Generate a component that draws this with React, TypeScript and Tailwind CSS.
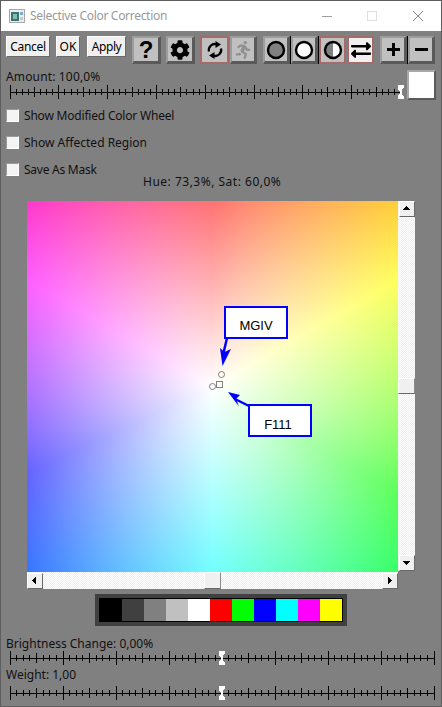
import React from "react";
import { FaCog, FaRunning, FaExchangeAlt } from "react-icons/fa";

const font = "font-['Noto_Sans','Liberation_Sans',sans-serif]";

function Slider({ x0, x1, cx, h = 17 }: { x0: number; x1: number; cx: number; h?: number }) {
  const ticks: React.ReactNode[] = [];
  const mid = Math.floor(h / 2);
  for (let i = 0; i <= 64; i++) {
    const x = Math.round(x0 + ((x1 - x0) * i) / 64) + 0.5;
    const len = i % 8 === 0 ? 7 : i % 4 === 0 ? 5 : 3;
    ticks.push(<line key={i} x1={x} x2={x} y1={mid - len} y2={mid + len} stroke="#000" />);
  }
  return (
    <svg width={440} height={h} className="block" shapeRendering="crispEdges">
      <line x1={x0} x2={x1} y1={mid + 0.5} y2={mid + 0.5} stroke="#000" />
      {ticks}
      <polygon
        points={`${cx - 3},${mid - 7} ${cx + 3},${mid - 7} ${cx + 3},${mid - 4} ${cx + 1},${mid - 1} ${cx + 1},${mid + 2} ${cx + 3},${mid + 4} ${cx + 3},${mid + 7} ${cx - 3},${mid + 7} ${cx - 3},${mid + 4} ${cx - 1},${mid + 2} ${cx - 1},${mid - 1} ${cx - 3},${mid - 4}`}
        fill="#fff"
      />
    </svg>
  );
}

function TextBtn({ label, w, cls }: { label: string; w: string; cls: string }) {
  return (
    <div
      className={`${w} ${cls} h-[21px] flex items-center justify-center bg-[#f0f0f0] border border-t-white border-l-white border-r-[#696969] border-b-[#696969] text-[12px] text-black`}
    >
      {label}
    </div>
  );
}

function IconBtn({
  children,
  w = "w-[29px]",
  state = "normal",
}: {
  children: React.ReactNode;
  w?: string;
  state?: "normal" | "on" | "sel";
}) {
  const cls =
    state === "normal"
      ? "bg-[#c0c0c0] border-t-[#9c9c9c] border-l-[#9c9c9c] border-r-[#5a5a5a] border-b-[#5a5a5a] border-r-[3px] border-b-[3px]"
      : state === "on"
        ? "bg-[#c0c0c0] border-[#a56b6b]"
        : "bg-[#f0f0f0] border-[#a56b6b]";
  return <div className={`${w} h-[28px] shrink-0 flex items-center justify-center border-2 ${cls}`}>{children}</div>;
}

function Circle({ fill }: { fill: "gray" | "white" | "half" }) {
  return (
    <svg width="20" height="20" viewBox="0 0 20 20">
      <circle cx="10" cy="10" r="8" fill={fill === "gray" ? "#808080" : "#fff"} />
      {fill === "half" && <path d="M10 2a8 8 0 0 0 0 16z" fill="#808080" />}
      <circle cx="10" cy="10" r="8" fill="none" stroke="#000" strokeWidth="2.4" />
    </svg>
  );
}

function ScrollBtn({ dir }: { dir: "up" | "down" | "left" | "right" }) {
  const pts = {
    up: "4,9 11,9 7.5,5",
    down: "4,6 11,6 7.5,10",
    left: "9,4 9,11 5,7.5",
    right: "6,4 6,11 10,7.5",
  }[dir];
  return (
    <div className="w-[16px] h-[16px] shrink-0 bg-[#f0f0f0] border-t border-l border-t-white border-l-white border-r border-b border-r-[#696969] border-b-[#696969]">
      <svg width="15" height="15" className="block -mt-px -ml-px" shapeRendering="crispEdges">
        <polygon points={pts} fill="#000" />
      </svg>
    </div>
  );
}

const track = "bg-[repeating-conic-gradient(#ffffff_0_25%,#eeeeee_0_50%)] bg-size-[2px_2px]";

function Check({ label, cls }: { label: string; cls: string }) {
  return (
    <div className="flex items-center h-[13px] gap-[5px]">
      <div className="w-[13px] h-[13px] bg-[#f4f4f4] border border-t-[#9a9a9a] border-l-[#9a9a9a] border-r-white border-b-white" />
      <span className={`text-[12px] leading-[13px] text-[#111] ${cls}`}>{label}</span>
    </div>
  );
}

const swatches = [
  "bg-[#000000]",
  "bg-[#404040]",
  "bg-[#808080]",
  "bg-[#c0c0c0]",
  "bg-[#ffffff]",
  "bg-[#ff0000]",
  "bg-[#00ff00]",
  "bg-[#0000ff]",
  "bg-[#00ffff]",
  "bg-[#ff00ff]",
  "bg-[#ffff00]",
];

export default function App() {
  return (
    <div className={`w-[442px] h-[707px] overflow-hidden bg-[#808080] border border-[#5e5e5e] ${font} relative`}>
      {/* Title bar */}
      <div className="h-[30px] bg-white flex items-center pl-[8px]">
        <svg width="16" height="14" viewBox="0 0 16 14" className="shrink-0">
          <rect x="0.5" y="0.5" width="15" height="13" fill="#e8eef2" stroke="#a8a8a8" />
          <rect x="2" y="3" width="8" height="9" fill="#3f6f78" />
          <rect x="4" y="5" width="4" height="5" fill="#7fc0a8" />
          <rect x="11" y="3" width="3" height="3" fill="#7fa8c8" />
          <rect x="11" y="8" width="3" height="3" fill="#c0ccd4" />
        </svg>
        <span className="ml-[5px] text-[12px] tracking-[-0.3px] text-[#999999]">Selective Color Correction</span>
        <div className="ml-auto flex items-center">
          <svg width="120" height="12" className="block" shapeRendering="crispEdges">
            <line x1="1" x2="11" y1="6.5" y2="6.5" stroke="#a0a0a0" />
            <rect x="46.5" y="1.5" width="9" height="9" fill="none" stroke="#e0e0e0" />
            <path d="M92 1 L102 11 M102 1 L92 11" stroke="#888" shapeRendering="auto" />
          </svg>
        </div>
      </div>

      {/* Toolbar */}
      <div className="flex items-start mt-[5px] pl-[5px]">
        <TextBtn label="Cancel" w="w-[44px]" cls="tracking-[-0.3px]" />
        <div className="ml-[6px]">
          <TextBtn label="OK" w="w-[24px]" cls="tracking-normal" />
        </div>
        <div className="ml-[7px]">
          <TextBtn label="Apply" w="w-[39px]" cls="tracking-[-0.4px]" />
        </div>
        <div className="ml-[6px]">
          <IconBtn>
            <span className="font-['Liberation_Sans'] font-bold text-[24px] leading-none text-black">?</span>
          </IconBtn>
        </div>
        <div className="ml-[5px]">
          <IconBtn>
            <FaCog size={20} color="#000" />
          </IconBtn>
        </div>
        <div className="ml-[5px]">
          <IconBtn state="on">
            <svg width="18" height="18" viewBox="0 0 18 18" fill="none">
              <path d="M3 10.5 A6 6 0 0 1 10.5 3.3" stroke="#000" strokeWidth="2.3" />
              <polygon points="9.5,0 15,3.5 9.5,7" fill="#000" />
              <path d="M15 7.5 A6 6 0 0 1 7.5 14.7" stroke="#000" strokeWidth="2.3" />
              <polygon points="8.5,11 3,14.5 8.5,18" fill="#000" />
            </svg>
          </IconBtn>
        </div>
        <div className="ml-px">
          <IconBtn w="w-[27px]">
            <FaRunning size={18} color="#8f8f8f" />
          </IconBtn>
        </div>
        <div className="ml-[6px] flex">
          <IconBtn w="w-[27px]">
            <Circle fill="gray" />
          </IconBtn>
          <div className="w-px h-[28px] bg-black" />
          <IconBtn w="w-[27px]">
            <Circle fill="white" />
          </IconBtn>
          <div className="w-px h-[28px] bg-black" />
          <IconBtn w="w-[27px]" state="on">
            <Circle fill="half" />
          </IconBtn>
        </div>
        <div className="ml-px">
          <IconBtn w="w-[27px]" state="sel">
            <FaExchangeAlt size={20} color="#000" />
          </IconBtn>
        </div>
        <div className="ml-[6px] flex">
          <IconBtn w="w-[27px]">
            <svg width="13" height="13" shapeRendering="crispEdges">
              <path d="M0 5h13v3H0zM5 0h3v13H5z" fill="#000" />
            </svg>
          </IconBtn>
          <div className="w-px h-[28px] bg-black" />
          <IconBtn w="w-[27px]">
            <svg width="13" height="13" shapeRendering="crispEdges">
              <path d="M0 5h13v3H0z" fill="#000" />
            </svg>
          </IconBtn>
        </div>
      </div>

      {/* Amount */}
      <div className="relative mt-[6px] h-[30px]">
        <div className="pl-[5px] h-[14px] text-[12px] tracking-[0.15px] leading-[14px] text-[#111]">Amount: 100,0%</div>
        <Slider x0={8.5} x1={399} cx={399.5} h={16} />
        <div className="absolute left-[406px] top-0 w-[29px] h-[30px] bg-white border-2 border-t-[#a8a8a8] border-l-[#a8a8a8] border-r-[#5a5a5a] border-b-[#5a5a5a]" />
      </div>

      {/* Checkboxes */}
      <div className="pt-[9px] pl-[5px] flex flex-col gap-[14px]">
        <Check label="Show Modified Color Wheel" cls="tracking-[-0.2px]" />
        <Check label="Show Affected Region" cls="tracking-normal" />
        <Check label="Save As Mask" cls="tracking-[-0.25px]" />
      </div>
      <div className="-mt-px h-[13px] pl-[142px] text-[12px] tracking-[0.5px] leading-[13px] text-[#111]">Hue: 73,3%, Sat: 60,0%</div>

      {/* Wheel + scrollbars */}
      <div className="mt-[13px] pl-[26px] flex items-start">
        <div className="relative w-[371px] h-[371px] shrink-0 bg-[radial-gradient(circle_335px_at_185.5px_185.5px,#ffffff,#ffffff00),conic-gradient(from_0deg_at_185.5px_185.5px,#ff0000,#ffff00_60deg,#00ff00_120deg,#00ffff_180deg,#0000ff_245deg,#ff00ff_300deg,#ff0000)]">
          <svg width="371" height="371" className="absolute left-0 top-0">
            <circle cx="194.5" cy="173.5" r="3" fill="none" stroke="#808080" />
            <circle cx="185.5" cy="185.5" r="3" fill="none" stroke="#808080" />
            <rect x="189.5" y="180.5" width="6" height="6" fill="none" stroke="#808080" />
            <path d="M200 137 L196.5 152" stroke="#0000ff" strokeWidth="2.5" />
            <polygon points="195.5,165 193,147 197.5,151 204,148" fill="#0000ff" />
            <path d="M222 205 L208 198" stroke="#0000ff" strokeWidth="2.5" />
            <polygon points="201,191 213,194 209,198 212,205.5" fill="#0000ff" />
          </svg>
          <div className="absolute left-[197px] top-[105px] w-[64px] h-[33px] bg-white border-2 border-[#0000ff] flex items-center justify-center pt-[7px] font-['Liberation_Sans'] text-[13px] text-black">
            MGIV
          </div>
          <div className="absolute left-[221px] top-[203px] w-[64px] h-[33px] bg-white border-2 border-[#0000ff] flex items-center justify-center pt-[8px] pr-[4px] font-['Liberation_Sans'] text-[13px] text-black">
            F111
          </div>
        </div>
        <div className={`w-[17px] h-[370px] shrink-0 ${track} flex flex-col items-center`}>
          <ScrollBtn dir="up" />
          <div className="mt-[161px] w-[17px] h-[16px] bg-[#f0f0f0] border border-t-white border-l-white border-r-[#8a8a8a] border-b-[#696969]" />
          <div className="mt-auto">
            <ScrollBtn dir="down" />
          </div>
        </div>
      </div>
      <div className={`ml-[26px] w-[371px] h-[17px] ${track} flex items-center`}>
        <ScrollBtn dir="left" />
        <div className="ml-[161px] w-[17px] h-[17px] bg-[#f0f0f0] border border-t-white border-l-white border-r-[#8a8a8a] border-b-[#696969]" />
        <div className="ml-auto">
          <ScrollBtn dir="right" />
        </div>
      </div>

      {/* Swatches */}
      <div className="mt-[5px] ml-[94px] w-[252px] h-[32px] bg-[#404040] p-[4px]">
        <div className="flex h-[24px] border border-black pr-0">
          {swatches.map((c) => (
            <div key={c} className={`${c} w-[22px] shrink-0 h-full`} />
          ))}
        </div>
      </div>

      {/* Bottom sliders */}
      <div className="mt-[11px] pl-[5px] h-[13px] text-[12px] leading-[13px] text-[#111]">Brightness Change: 0,00%</div>
      <Slider x0={8.5} x1={432.5} cx={220.5} />
      <div className="mt-px pl-[5px] h-[13px] text-[12px] leading-[13px] text-[#111]">Weight: 1,00</div>
      <div className="mt-[4px]">
        <Slider x0={8.5} x1={432.5} cx={220.5} />
      </div>
    </div>
  );
}
